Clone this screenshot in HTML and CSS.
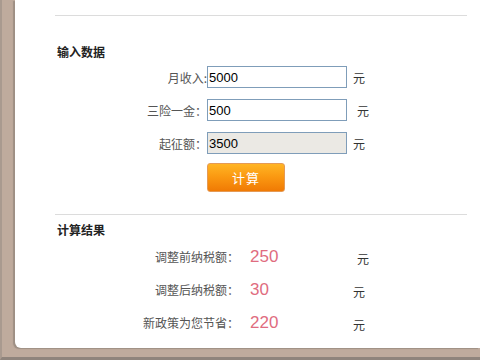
FILE: index.html
```html
<!DOCTYPE html>
<html lang="zh-CN">
<head>
  <meta charset="UTF-8" />
  <title>个税计算器</title>
  <link rel="stylesheet" href="styles.css">
</head>
<body>
  <div class="panel">
    <hr class="rule">

    <h3 class="title first">输入数据</h3>
    <div class="form">
      <div class="row">
        <label class="label">月收入:</label>
        <input class="field" type="text" value="5000">
        <span class="unit">元</span>
      </div>
      <div class="row">
        <label class="label">三险一金：</label>
        <input class="field" type="text" value="500">
        <span class="unit wide">元</span>
      </div>
      <div class="row">
        <label class="label">起征额：</label>
        <input class="field readonly" type="text" value="3500" readonly>
        <span class="unit">元</span>
      </div>
      <div class="row btn-row">
        <span class="label"></span>
        <button class="btn" type="button">计算</button>
      </div>
    </div>

    <hr class="rule mid">

    <h3 class="title">计算结果</h3>
    <div class="results">
      <div class="res-row">
        <span class="res-label">调整前纳税额：</span>
        <span class="res-value">250</span>
        <span class="res-unit wide">元</span>
      </div>
      <div class="res-row">
        <span class="res-label">调整后纳税额：</span>
        <span class="res-value">30</span>
        <span class="res-unit">元</span>
      </div>
      <div class="res-row">
        <span class="res-label">新政策为您节省：</span>
        <span class="res-value">220</span>
        <span class="res-unit">元</span>
      </div>
    </div>
  </div>
</body>
</html>
```

FILE: styles.css
```css
* {
  margin: 0;
  padding: 0;
  box-sizing: border-box;
}

html, body {
  width: 480px;
  height: 360px;
  overflow: hidden;
}

body {
  background: #bfab9d;
  border-left: 2px solid #a99a8f;
  border-bottom: 3px solid #8f847c;
  font-family: "Noto Sans CJK SC", "Noto Sans", sans-serif;
  font-size: 12px;
  color: #444;
}

.panel {
  margin-left: 13px;
  height: 348px;
  background: #fff;
  border-bottom-left-radius: 6px;
  box-shadow: -2px 1px 1px #9e8f84;
  padding: 15px 0 0 40px;
}

.rule {
  width: 412px;
  border: 0;
  border-top: 1px solid #dcdcdc;
}

.rule.mid {
  margin-top: 22px;
}

.title {
  font-size: 12px;
  font-weight: bold;
  color: #222;
  line-height: 16px;
  margin-top: 7px;
  padding-left: 2px;
}

.title.first {
  margin-top: 28px;
}

/* 输入数据 */
.form {
  margin-top: 6px;
  display: flex;
  flex-direction: column;
  gap: 11px;
}

.row {
  display: flex;
  align-items: center;
  height: 22px;
}

.label {
  width: 152px;
  text-align: right;
  color: #555;
}

.field {
  width: 140px;
  height: 22px;
  border: 1px solid #7f9db9;
  font-family: "Liberation Sans", Arial, sans-serif;
  font-size: 13px;
  color: #000;
  padding: 0 1px;
  outline: none;
}

.field.readonly {
  background: #ebe9e4;
}

.unit {
  margin-left: 6px;
  color: #333;
}

.unit.wide {
  margin-left: 10px;
}

.btn-row {
  height: 29px;
  margin-top: -2px;
}

.btn {
  height: 29px;
  width: 78px;
  border: 1px solid #e59a55;
  border-radius: 3px;
  background: linear-gradient(180deg, #ffb524 0%, #fb9a12 45%, #f07a04 100%);
  color: #fff;
  font-family: "Noto Sans CJK SC", sans-serif;
  font-size: 13px;
  letter-spacing: 1px;
}

/* 计算结果 */
.results {
  margin-top: 2px;
  display: flex;
  flex-direction: column;
}

.res-row {
  display: flex;
  align-items: center;
  height: 33px;
}

.res-label {
  width: 184px;
  text-align: right;
  color: #555;
}

.res-value {
  margin-left: 11px;
  width: 100px;
  font-family: "Liberation Sans", Arial, sans-serif;
  font-size: 17px;
  color: #e06c80;
}

.res-unit {
  margin-left: 3px;
  margin-top: 4px;
  color: #333;
}

.res-unit.wide {
  margin-left: 7px;
}
```
